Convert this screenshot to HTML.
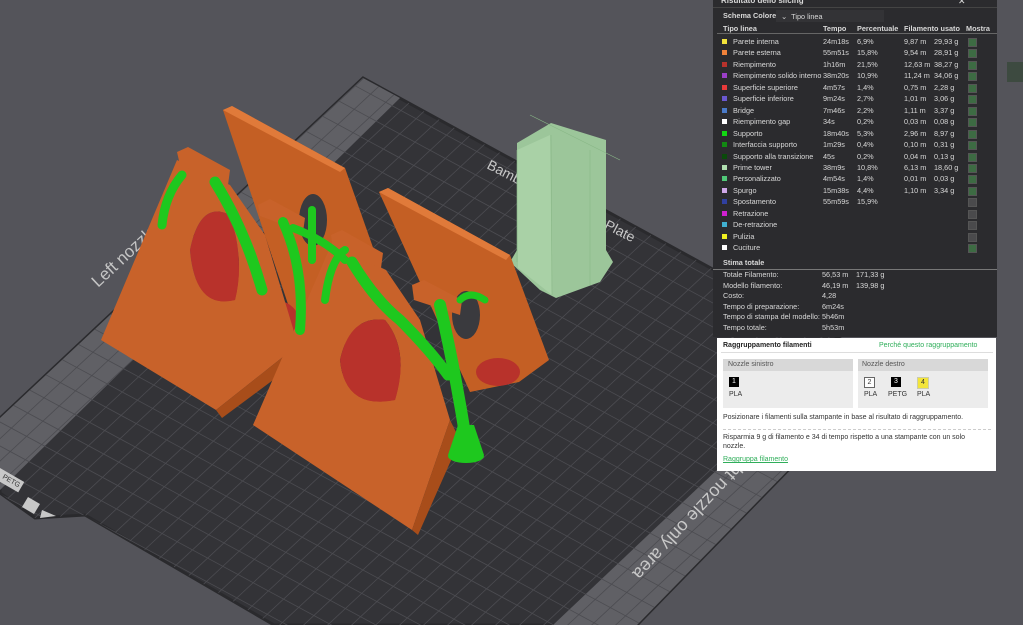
<!DOCTYPE html>
<html><head><meta charset="utf-8"><style>
body{margin:0;width:1023px;height:625px;overflow:hidden;background:#54545a;font-family:"Liberation Sans",sans-serif;position:relative}
.p{position:absolute;background:#2b2b2e;left:713px;top:0;width:284px;height:337px;color:#d8d8d8;font-size:7.3px}
.t{position:absolute;white-space:nowrap}
.sw{position:absolute;width:5px;height:5px}
.cb{position:absolute;left:255px;width:7px;height:7px;background:#3d6b43;border:1px solid #555}
.cb.off{background:#4a4a4c}
.pop{position:absolute;left:717px;top:338px;width:279px;height:133px;background:#fff;color:#333;font-size:7px}
</style></head><body>
<svg width="1023" height="625" style="position:absolute;left:0;top:0">
<defs>
<clipPath id="bed"><polygon points="363,78 890,366 637,625 274,625 85,515 35,518 0,493 0,418"/></clipPath>
</defs>
<polygon points="363,78 890,366 637,625 274,625 85,515 35,518 0,493 0,418" fill="#333337" stroke="#2a2a2d" stroke-width="3"/>
<polygon points="363,78 400,98 0,490 0,418" fill="#606065"/>
<polygon points="850,344 890,366 637,625 553,625" fill="#606065"/>
<g clip-path="url(#bed)" stroke="#4c4c51" stroke-width="0.8" id="grid"></g>
<text x="98" y="288" fill="#c4c4c4" font-size="17" transform="rotate(-43 98 288)">Left nozzle only area</text>
<text x="745" y="472" fill="#c8c8c8" font-size="18" transform="rotate(133 745 472)" dy="14">ht nozzle only area</text>
<text x="486" y="168" fill="#c8c8c8" font-size="14" transform="rotate(27 486 168)">Bambu Textured PEI Plate</text>
<rect x="0" y="468" width="28" height="12" fill="#c8c8c8" transform="rotate(30 0 468)"/>
<text x="2" y="478" font-size="7" fill="#333" transform="rotate(30 2 478)">PETG</text>
<polygon points="28,497 40,504 34,514 22,507" fill="#c8c8c8"/>
<polygon points="42,510 56,516 40,518" fill="#c8c8c8"/>
<!-- prime tower -->
<polygon points="517,143 551,123 606,140 606,250 613,262 600,282 556,298 540,290 510,262 517,250" fill="#9cc69a"/>
<polygon points="517,150 550,135 552,295 518,268" fill="#a9d1a6"/>
<g stroke="#89b787" stroke-width="0.6"><line x1="551" y1="135" x2="552" y2="295"/><line x1="590" y1="150" x2="590" y2="285"/><line x1="517" y1="150" x2="517" y2="262"/><line x1="530" y1="115" x2="620" y2="160"/></g>
<!-- back plates -->
<polygon points="223,110 232,106 345,168 382,273 352,345 300,340" fill="#c45f24"/>
<polygon points="223,110 232,106 345,168 340,172" fill="#e07a3a"/>
<polygon points="379,192 388,188 510,255 549,360 519,382 470,392" fill="#c45f24"/>
<polygon points="379,192 388,188 510,255 506,260" fill="#e07a3a"/>
<ellipse cx="313" cy="220" rx="14" ry="26" fill="#3a3a3e"/>
<ellipse cx="466" cy="315" rx="14" ry="24" fill="#3a3a3e"/>
<!-- red infill -->
<ellipse cx="225" cy="290" rx="32" ry="24" fill="#b8322b"/>
<ellipse cx="278" cy="325" rx="22" ry="24" fill="#b8322b"/>
<ellipse cx="375" cy="385" rx="36" ry="26" fill="#b8322b"/>
<ellipse cx="420" cy="420" rx="25" ry="30" fill="#b8322b"/>
<ellipse cx="498" cy="372" rx="22" ry="14" fill="#b8322b"/>
<!-- front plate A -->
<path d="M177,160 L230,185 L265,235 L298,345 L216,410 L101,340 Z M190,250 Q195,310 235,300 Q245,260 230,215 Q200,200 190,250 Z" fill="#c8622a" fill-rule="evenodd"/>
<path d="M190,250 Q195,310 235,300 Q245,260 230,215 Q200,200 190,250 Z" fill="#b8322b"/>
<polygon points="216,410 298,345 300,360 222,418" fill="#a84d1a"/>
<!-- front plate B -->
<path d="M331,245 L386,270 L420,320 L450,420 L412,530 L253,425 Z M340,360 Q345,410 395,400 Q410,350 385,320 Q350,315 340,360 Z" fill="#c8622a" fill-rule="evenodd"/>
<path d="M340,360 Q345,410 395,400 Q410,350 385,320 Q350,315 340,360 Z" fill="#b8322b"/>
<polygon points="412,530 450,420 460,440 418,535" fill="#a84d1a"/>
<!-- notches -->
<g fill="#c8622a"><polygon points="177,152 188,147 230,170 228,185 180,165"/><polygon points="258,205 270,199 305,218 303,232 260,216"/><polygon points="331,235 342,230 383,253 381,268 333,250"/><polygon points="412,285 424,280 462,300 460,315 414,300"/></g>
<!-- supports -->
<g fill="none" stroke="#1ec81e" stroke-linecap="round">
<path d="M182,175 Q165,195 162,225" stroke-width="9"/>
<path d="M215,182 Q245,230 262,290" stroke-width="11"/>
<path d="M283,222 Q305,270 300,330" stroke-width="10"/>
<path d="M293,228 Q325,240 345,260" stroke-width="8"/>
<path d="M352,262 Q375,300 400,320 Q430,350 448,375" stroke-width="11"/>
<path d="M440,305 Q455,370 466,440" stroke-width="12"/>
<path d="M312,210 L312,260" stroke-width="8"/>
<path d="M460,300 Q470,290 485,300" stroke-width="7"/>
<path d="M345,250 Q330,260 325,300" stroke-width="8"/>
</g>
<polygon points="458,425 474,425 484,455 448,455" fill="#1ec81e"/>
<ellipse cx="466" cy="456" rx="18" ry="7" fill="#1ec81e"/>
<rect x="1007" y="62" width="16" height="20" fill="#3d4a40"/>
</svg>
<script>
var g=document.getElementById('grid'),s='';
for(var i=-80;i<80;i++){var o=i*24;s+='<line x1="-300" y1="'+(o-172)+'" x2="1300" y2="'+(o+692)+'"/>';s+='<line x1="'+(o-400)+'" y1="900" x2="'+(o+600)+'" y2="-30"/>';}
g.innerHTML=s;
</script>
<div class="p">
<div class="t" style="left:8px;top:-4px;font-weight:bold;font-size:8px">Risultato dello slicing</div>
<div class="t" style="left:245px;top:-4px;font-size:9px">✕</div>
<div style="position:absolute;left:0;top:7px;width:284px;height:1px;background:#444"></div>
<div class="t" style="left:10px;top:11px;font-weight:bold">Schema Colore</div>
<div style="position:absolute;left:63px;top:10px;width:108px;height:12px;background:#333336"></div>
<div class="t" style="left:68px;top:12px">⌄ &nbsp;Tipo linea</div>
<div class="t" style="left:10px;top:24px;font-weight:bold">Tipo linea</div>
<div class="t" style="left:110px;top:24px;font-weight:bold">Tempo</div>
<div class="t" style="left:144px;top:24px;font-weight:bold">Percentuale</div>
<div class="t" style="left:191px;top:24px;font-weight:bold">Filamento usato</div>
<div class="t" style="left:253px;top:24px;font-weight:bold">Mostra</div>
<div style="position:absolute;left:4px;top:33px;width:280px;height:1px;background:#666"></div>
<div id="rows"></div>
<div class="t" style="left:10px;top:258px;font-weight:bold">Stima totale</div>
<div style="position:absolute;left:0;top:269px;width:284px;height:1px;background:#777"></div>
<div class="t" style="left:10px;top:270px;line-height:10.6px">Totale Filamento:<br>Modello filamento:<br>Costo:<br>Tempo di preparazione:<br>Tempo di stampa del modello:<br>Tempo totale:</div>
<div class="t" style="left:109px;top:270px;line-height:10.6px">56,53 m<br>46,19 m<br>4,28<br>6m24s<br>5h46m<br>5h53m</div>
<div class="t" style="left:143px;top:270px;line-height:10.6px">171,33 g<br>139,98 g</div>
</div>
<div class="pop">
<div class="t" style="left:6px;top:4px;font-weight:bold;color:#222">Raggruppamento filamenti</div>
<div class="t" style="left:162px;top:4px;color:#2fae5a">Perché questo raggruppamento</div>
<div style="position:absolute;left:4px;top:14px;width:272px;height:1px;background:#ddd"></div>
<div style="position:absolute;left:6px;top:21px;width:130px;height:49px;background:#ececec"></div>
<div style="position:absolute;left:6px;top:21px;width:130px;height:12px;background:#d8d8d8"></div>
<div class="t" style="left:11px;top:23px;color:#555">Nozzle sinistro</div>
<div style="position:absolute;left:141px;top:21px;width:130px;height:49px;background:#ececec"></div>
<div style="position:absolute;left:141px;top:21px;width:130px;height:12px;background:#d8d8d8"></div>
<div class="t" style="left:145px;top:23px;color:#555">Nozzle destro</div>
<div class="t" style="left:12px;top:39px;width:10px;height:10px;background:#000;color:#fff;text-align:center;line-height:10px">1</div>
<div class="t" style="left:12px;top:53px">PLA</div>
<div class="t" style="left:147px;top:39px;width:9px;height:9px;background:#fff;border:1px solid #666;text-align:center;line-height:9px">2</div>
<div class="t" style="left:147px;top:53px">PLA</div>
<div class="t" style="left:174px;top:39px;width:10px;height:10px;background:#000;color:#fff;text-align:center;line-height:10px">3</div>
<div class="t" style="left:171px;top:53px">PETG</div>
<div class="t" style="left:200px;top:39px;width:10px;height:10px;background:#f3e53a;border:1px solid #cca;text-align:center;line-height:10px">4</div>
<div class="t" style="left:200px;top:53px">PLA</div>
<div class="t" style="left:6px;top:76px">Posizionare i filamenti sulla stampante in base al risultato di raggruppamento.</div>
<div style="position:absolute;left:6px;top:91px;width:268px;border-top:1px dashed #ccc"></div>
<div class="t" style="left:6px;top:95px;line-height:9px">Risparmia 9 g di filamento e 34 di tempo rispetto a una stampante con un solo<br>nozzle.</div>
<div class="t" style="left:6px;top:118px;color:#2fae5a;text-decoration:underline">Raggruppa filamento</div>
</div>
<script>
var R=[["#f2e23a","Parete interna","24m18s","6,9%","9,87 m","29,93 g",1],["#f0823a","Parete esterna","55m51s","15,8%","9,54 m","28,91 g",1],["#b8322c","Riempimento","1h16m","21,5%","12,63 m","38,27 g",1],["#9b3fc8","Riempimento solido interno","38m20s","10,9%","11,24 m","34,06 g",1],["#e83a3a","Superficie superiore","4m57s","1,4%","0,75 m","2,28 g",1],["#6a58d0","Superficie inferiore","9m24s","2,7%","1,01 m","3,06 g",1],["#4a7ac8","Bridge","7m46s","2,2%","1,11 m","3,37 g",1],["#ffffff","Riempimento gap","34s","0,2%","0,03 m","0,08 g",1],["#12d812","Supporto","18m40s","5,3%","2,96 m","8,97 g",1],["#128a12","Interfaccia supporto","1m29s","0,4%","0,10 m","0,31 g",1],["#0a4a0a","Supporto alla transizione","45s","0,2%","0,04 m","0,13 g",1],["#b0e0b0","Prime tower","38m9s","10,8%","6,13 m","18,60 g",1],["#50c878","Personalizzato","4m54s","1,4%","0,01 m","0,03 g",1],["#d0a8e8","Spurgo","15m38s","4,4%","1,10 m","3,34 g",1],["#3040a0","Spostamento","55m59s","15,9%","","",0],["#d020d0","Retrazione","","","","",0],["#40b0d0","De-retrazione","","","","",0],["#f0f020","Pulizia","","","","",0],["#ffffff","Cuciture","","","","",1]];
var h='';R.forEach(function(r,i){var y=37+i*11.45;h+='<div class="sw" style="left:9px;top:'+(y+2)+'px;background:'+r[0]+'"></div><div class="t" style="left:20px;top:'+y+'px">'+r[1]+'</div><div class="t" style="left:110px;top:'+y+'px">'+r[2]+'</div><div class="t" style="left:144px;top:'+y+'px">'+r[3]+'</div><div class="t" style="left:191px;top:'+y+'px">'+r[4]+'</div><div class="t" style="left:221px;top:'+y+'px">'+r[5]+'</div><div class="cb'+(r[6]?'':' off')+'" style="top:'+(y+1)+'px"></div>';});
document.getElementById('rows').innerHTML=h;
</script>
</body></html>
